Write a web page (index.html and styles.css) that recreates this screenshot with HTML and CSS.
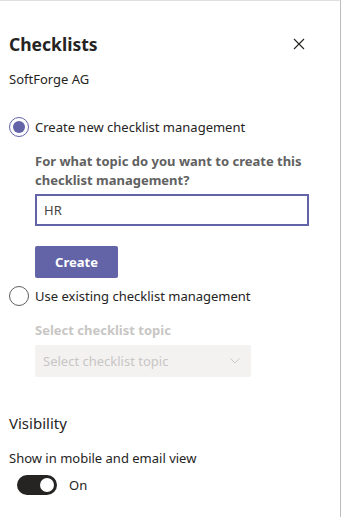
FILE: index.html
```html
<!DOCTYPE html>
<html lang="en">
<head>
    <meta charset="UTF-8">
    <title>Checklists</title>
    <link rel="stylesheet" href="styles.css">
</head>
<body>
    <div class="panel">
        <div class="header">
            <h1>Checklists</h1>
            <button class="close-btn" aria-label="Close">
                <svg width="12" height="12" viewBox="0 0 12 12"><path d="M1 1 L11 11 M11 1 L1 11" stroke="#252423" stroke-width="1.1" fill="none"/></svg>
            </button>
        </div>
        <div class="company">SoftForge AG</div>

        <label class="radio-row">
            <span class="radio checked"></span>
            <span>Create new checklist management</span>
        </label>
        <div class="option-body">
            <div class="field-label">For what topic do you want to create this checklist management?</div>
            <div class="text-input">HR</div>
            <button class="primary-btn">Create</button>
        </div>

        <label class="radio-row">
            <span class="radio"></span>
            <span>Use existing checklist management</span>
        </label>
        <div class="option-body disabled">
            <div class="field-label">Select checklist topic</div>
            <div class="dropdown">
                <span>Select checklist topic</span>
                <svg width="10" height="6" viewBox="0 0 10 6"><path d="M0.5 0.5 L5 5 L9.5 0.5" stroke="#c8c8c8" stroke-width="1" fill="none"/></svg>
            </div>
        </div>

        <div class="section-title">Visibility</div>
        <div class="toggle-label">Show in mobile and email view</div>
        <div class="toggle-row">
            <span class="toggle"><span class="knob"></span></span>
            <span>On</span>
        </div>
    </div>
</body>
</html>
```

FILE: styles.css
```css
body {
    margin: 0;
    background: #ffffff;
    font-family: "Noto Sans", sans-serif;
    font-size: 13px;
    color: #252423;
}

.panel {
    width: 341px;
    height: 517px;
    border-top: 1px solid #e1dfdd;
    border-right: 1px solid #bdbdbd;
    padding-left: 9px;
    box-sizing: border-box;
}

.header {
    display: flex;
    align-items: center;
    justify-content: space-between;
    padding-top: 30px;
    padding-right: 35px;
}

.header h1 {
    margin: 0;
    font-size: 17.5px;
    font-weight: 700;
    line-height: 26px;
}

.close-btn {
    border: none;
    background: none;
    padding: 0;
    display: flex;
}

.company {
    margin-top: 12px;
    line-height: 20px;
}

.radio-row {
    display: flex;
    align-items: center;
    gap: 6px;
    line-height: 20px;
}

.company + .radio-row {
    margin-top: 28px;
}

.radio {
    width: 20px;
    height: 20px;
    border: 1px solid #605e5c;
    border-radius: 50%;
    box-sizing: border-box;
    display: flex;
    align-items: center;
    justify-content: center;
}

.radio.checked {
    border-color: #6264a7;
}

.radio.checked::after {
    content: "";
    width: 12px;
    height: 12px;
    border-radius: 50%;
    background: #6264a7;
}

.option-body {
    padding-left: 26px;
    padding-top: 15px;
    padding-bottom: 8px;
}

.field-label {
    font-weight: 700;
    color: #616161;
    line-height: 19px;
    margin-bottom: 4px;
}

.text-input {
    width: 274px;
    height: 32px;
    box-sizing: border-box;
    border: 2px solid #6264a7;
    padding: 0 7px;
    line-height: 28px;
    color: #484644;
}

.primary-btn {
    margin-top: 20px;
    width: 83px;
    height: 32px;
    border: none;
    border-radius: 2px;
    background: #6264a7;
    color: #ffffff;
    font-family: inherit;
    font-size: 13px;
    font-weight: 700;
}

.disabled .field-label {
    color: #c8c6c4;
    margin-bottom: 5px;
}

.dropdown {
    width: 216px;
    height: 32px;
    box-sizing: border-box;
    background: #f3f2f1;
    border-radius: 2px;
    display: flex;
    align-items: center;
    justify-content: space-between;
    padding: 0 11px 0 8px;
    color: #c8c6c4;
}

.section-title {
    margin-top: 27px;
    font-size: 15px;
    line-height: 22px;
}

.toggle-label {
    margin-top: 14px;
    line-height: 20px;
}

.toggle-row {
    display: flex;
    align-items: center;
    gap: 12px;
    padding-left: 8px;
    margin-top: 7px;
}

.toggle {
    width: 40px;
    height: 20px;
    border-radius: 10px;
    background: #252423;
    display: flex;
    align-items: center;
    justify-content: flex-end;
    padding: 0 3px;
    box-sizing: border-box;
}

.knob {
    width: 14px;
    height: 14px;
    border-radius: 50%;
    background: #ffffff;
}
```
